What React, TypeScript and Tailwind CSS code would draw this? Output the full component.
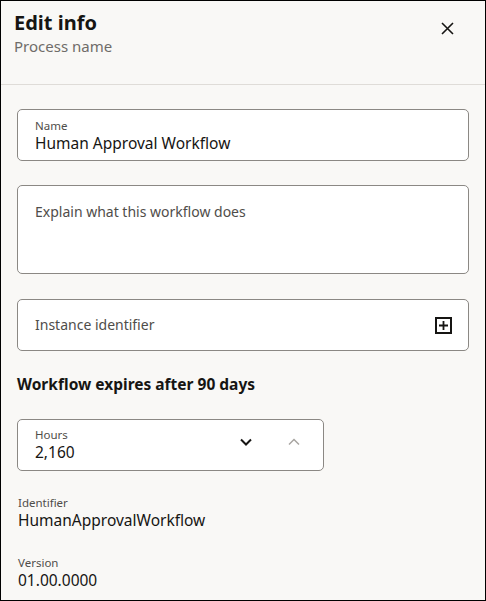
import React from "react";

const font = { fontFamily: '"Noto Sans", "Open Sans", sans-serif' };

export default function App() {
  return (
    <div
      className="w-[486px] h-[601px] bg-[#f9f8f6] border border-black flex flex-col text-[#161513] overflow-hidden"
      style={font}
    >
      <div className="h-[84px] border-b border-[#dfdcd8] pl-[13px] pr-[30px] pt-[8px] flex justify-between">
        <div>
          <div className="text-[20px] font-bold leading-[28px]">Edit info</div>
          <div className="text-[15px] text-[#6f6c69] leading-[20px] -mt-[1px]">Process name</div>
        </div>
        <button className="w-[16px] h-[16px] mt-[11px] flex items-center justify-center">
          <svg width="13" height="13" viewBox="0 0 13 13" fill="none" stroke="#161513" strokeWidth="1.6">
            <path d="M1 1 L12 12 M12 1 L1 12" />
          </svg>
        </button>
      </div>

      <div className="flex flex-col px-[16px] pt-[24px]">
        <div className="h-[52px] w-[452px] bg-white border border-[#8b8884] rounded-[5px] px-[17px] pt-[8px]">
          <div className="text-[11.5px] text-[#4f4d4a] leading-[15px]">Name</div>
          <div className="text-[15.5px] leading-[20px]">Human Approval Workflow</div>
        </div>

        <div className="h-[89px] w-[452px] mt-[24px] bg-white border border-[#8b8884] rounded-[5px] px-[17px] pt-[16px]">
          <div className="text-[14px] text-[#4f4d4a] leading-[20px]">Explain what this workflow does</div>
        </div>

        <div className="h-[52px] w-[452px] mt-[25px] bg-white border border-[#8b8884] rounded-[5px] pl-[17px] pr-[17px] flex items-center justify-between">
          <div className="text-[14px] text-[#4f4d4a] leading-[20px]">Instance identifier</div>
          <div className="w-[17px] h-[17px] border-2 border-[#161513] flex items-center justify-center mr-[-1px]">
            <svg width="9" height="9" viewBox="0 0 9 9" stroke="#161513" strokeWidth="1.8">
              <path d="M4.5 0 V9 M0 4.5 H9" />
            </svg>
          </div>
        </div>

        <div className="mt-[23px] text-[15.5px] font-bold leading-[20px]">Workflow expires after 90 days</div>

        <div className="h-[52px] w-[307px] mt-[25px] bg-white border border-[#8b8884] rounded-[5px] pl-[17px] pr-[23px] flex items-center justify-between">
          <div className="-mt-[1px]">
            <div className="text-[11.5px] text-[#4f4d4a] leading-[15px]">Hours</div>
            <div className="text-[15.5px] leading-[20px]">2,160</div>
          </div>
          <div className="flex items-center gap-[36px] mb-[6px]">
            <svg width="12" height="8" viewBox="0 0 12 8" fill="none" stroke="#161513" strokeWidth="2">
              <path d="M1 1.5 L6 6.5 L11 1.5" />
            </svg>
            <svg width="12" height="8" viewBox="0 0 12 8" fill="none" stroke="#a8a5a1" strokeWidth="1.5">
              <path d="M1 6.5 L6 1.5 L11 6.5" />
            </svg>
          </div>
        </div>

        <div className="mt-[24px] pl-[1px]">
          <div className="text-[11.5px] text-[#4f4d4a] leading-[15px]">Identifier</div>
          <div className="text-[15.5px] leading-[20px]">HumanApprovalWorkflow</div>
        </div>

        <div className="mt-[25px] pl-[1px]">
          <div className="text-[11.5px] text-[#4f4d4a] leading-[15px]">Version</div>
          <div className="text-[15.5px] leading-[20px]">01.00.0000</div>
        </div>
      </div>
    </div>
  );
}
